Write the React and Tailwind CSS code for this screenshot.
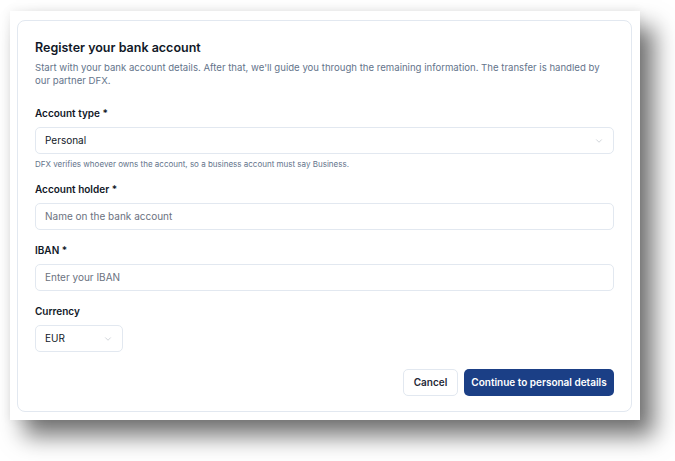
import React from "react";
import { ChevronDown } from "lucide-react";

const font = { fontFamily: "Inter, 'Noto Sans', sans-serif" };

function Label({ children }) {
  return (
    <p className="text-[10px] leading-[13px] font-semibold text-[#111827] mb-[7px]">
      {children}
    </p>
  );
}

function TextInput({ placeholder }) {
  return (
    <div className="h-[27px] w-full rounded-[5px] border border-[#e2e8f0] bg-white flex items-center px-[9px]">
      <span className="text-[10px] text-[#6b7280]">{placeholder}</span>
    </div>
  );
}

function Select({ value, className }) {
  return (
    <div
      className={
        "h-[27px] rounded-[5px] border border-[#e2e8f0] bg-white flex items-center justify-between pl-[9px] pr-[9px] " +
        className
      }
    >
      <span className="text-[10px] text-[#111827]">{value}</span>
      <ChevronDown size={10} strokeWidth={1.2} className="text-[#a3aab5]" />
    </div>
  );
}

export default function App() {
  return (
    <div className="w-[675px] h-[461px] bg-white pt-[11px] pl-[10px]" style={font}>
      <div className="w-[630px] h-[409px] bg-white pt-[9px] pl-[7px] pr-[8px] shadow-[14px_16px_22px_rgba(0,0,0,0.55),0_0_10px_rgba(0,0,0,0.07)]">
        <div className="h-[392px] rounded-[8px] border border-[#e2e8f0] px-[17px] pt-[19px]">
          <h1 className="text-[12.5px] leading-[16px] font-semibold text-[#111827]">
            Register your bank account
          </h1>
          <p className="mt-[5px] text-[9.6px] leading-[13px] text-[#64748b]">
            Start with your bank account details. After that, we'll guide you through the remaining
            information. The transfer is handled by our partner DFX.
          </p>

          <div className="mt-[20px]">
            <Label>Account type *</Label>
            <Select value="Personal" className="w-full" />
            <p className="mt-[5px] text-[8px] leading-[11px] text-[#64748b]">
              DFX verifies whoever owns the account, so a business account must say Business.
            </p>
          </div>

          <div className="mt-[13px]">
            <Label>Account holder *</Label>
            <TextInput placeholder="Name on the bank account" />
          </div>

          <div className="mt-[14px]">
            <Label>IBAN *</Label>
            <TextInput placeholder="Enter your IBAN" />
          </div>

          <div className="mt-[14px]">
            <Label>Currency</Label>
            <Select value="EUR" className="w-[88px]" />
          </div>

          <div className="mt-[17px] flex justify-end gap-[6px]">
            <button className="h-[27px] w-[55px] rounded-[5px] border border-[#e2e8f0] bg-white text-[10px] font-semibold text-[#1f2937]">
              Cancel
            </button>
            <button className="h-[27px] w-[150px] rounded-[5px] bg-[#1b3f86] text-[10px] font-semibold text-white">
              Continue to personal details
            </button>
          </div>
        </div>
      </div>
    </div>
  );
}
